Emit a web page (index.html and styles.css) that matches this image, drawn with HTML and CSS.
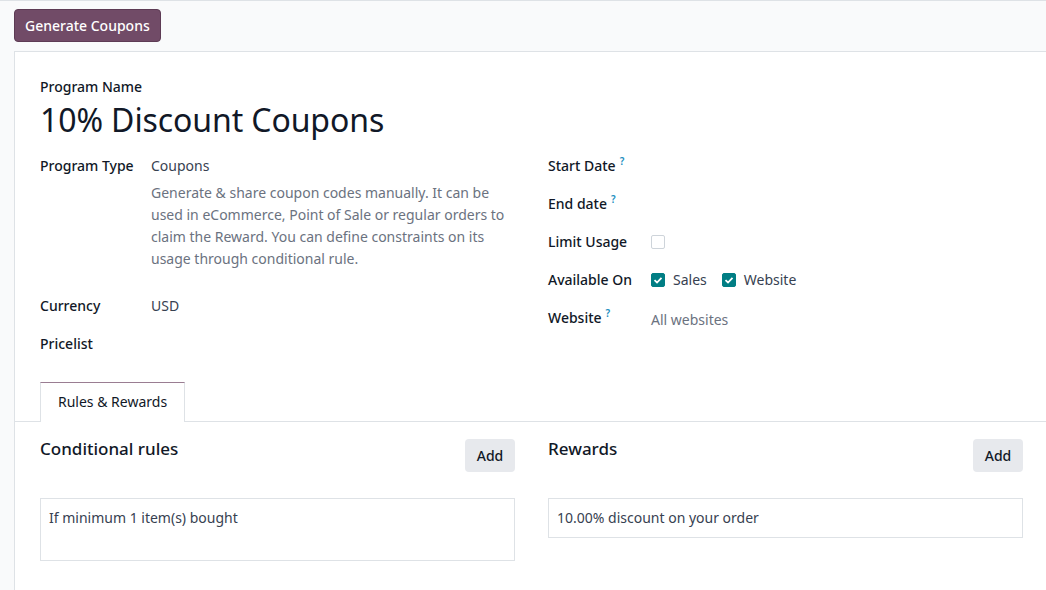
FILE: index.html
```html
<!DOCTYPE html>
<html>
<head>
<meta charset="utf-8">
<link rel="stylesheet" href="styles.css">
</head>
<body>
<div class="topbar">
  <button class="btn btn-primary">Generate Coupons</button>
</div>
<div class="sheet">
  <div class="title-block">
    <div class="name-label">Program Name</div>
    <h1 class="title">10% Discount Coupons</h1>
  </div>
  <div class="groups">
    <div class="group group-left">
      <div class="row">
        <div class="lbl">Program Type</div>
        <div class="val">
          <div>Coupons</div>
          <div class="desc">Generate &amp; share coupon codes manually. It can be used in eCommerce, Point of Sale or regular orders to claim the Reward. You can define constraints on its usage through conditional rule.</div>
        </div>
      </div>
      <div class="row"><div class="lbl">Currency</div><div class="val">USD</div></div>
      <div class="row"><div class="lbl">Pricelist</div><div class="val"></div></div>
    </div>
    <div class="group group-right">
      <div class="row"><div class="lbl">Start Date<sup class="tip">?</sup></div><div class="val"></div></div>
      <div class="row"><div class="lbl">End date<sup class="tip">?</sup></div><div class="val"></div></div>
      <div class="row"><div class="lbl">Limit Usage</div><div class="val"><span class="check"></span></div></div>
      <div class="row">
        <div class="lbl">Available On</div>
        <div class="val checks">
          <span class="check-item"><span class="check on"><svg viewBox="0 0 14 14" width="14" height="14"><path d="M3.5 7.2 L6 9.5 L10.5 4.8" fill="none" stroke="#fff" stroke-width="1.8"/></svg></span>Sales</span>
          <span class="check-item"><span class="check on"><svg viewBox="0 0 14 14" width="14" height="14"><path d="M3.5 7.2 L6 9.5 L10.5 4.8" fill="none" stroke="#fff" stroke-width="1.8"/></svg></span>Website</span>
        </div>
      </div>
      <div class="row"><div class="lbl">Website<sup class="tip">?</sup></div><div class="val muted">All websites</div></div>
    </div>
  </div>
  <div class="tabs">
    <div class="tab active">Rules &amp; Rewards</div>
  </div>
  <div class="tab-content">
    <div class="col">
      <div class="col-head">
        <h3>Conditional rules</h3>
        <button class="btn btn-secondary">Add</button>
      </div>
      <div class="list-box tall">If minimum 1 item(s) bought</div>
    </div>
    <div class="col">
      <div class="col-head">
        <h3>Rewards</h3>
        <button class="btn btn-secondary">Add</button>
      </div>
      <div class="list-box">10.00% discount on your order</div>
    </div>
  </div>
</div>
</body>
</html>
```
FILE: styles.css
```css
* { box-sizing: border-box; }
html, body { height: 100%; }
body {
  margin: 0;
  background: #f9fafb;
  font-family: "Noto Sans", "Open Sans", sans-serif;
  font-size: 14px;
  color: #374151;
  border-top: 1px solid #dee2e6;
  overflow: hidden;
}
.topbar {
  padding: 8px 14px 8px;
  height: 50px;
}
.btn {
  font-family: inherit;
  font-size: 14px;
  border-radius: 4px;
  cursor: pointer;
}
.btn-primary {
  background: #714b67;
  color: #fff;
  border: 1px solid #5d3b54;
  height: 33px;
  padding: 0 10px;
  font-weight: 500;
}
.sheet {
  margin-left: 14px;
  background: #fff;
  border-left: 1px solid #dee2e6;
  border-top: 1px solid #dee2e6;
  padding: 25px 23px 0 25px;
  min-height: calc(100% - 50px);
}
.name-label {
  font-weight: 500;
  color: #111827;
  line-height: 20px;
}
.title {
  margin: 3px 0 0;
  font-size: 32px;
  font-weight: 400;
  line-height: 40px;
  color: #111827;
  letter-spacing: -0.1px;
}
.groups {
  display: grid;
  grid-template-columns: 475px 475px;
  column-gap: 33px;
  margin-top: 15px;
}
.row {
  display: flex;
  line-height: 22px;
  margin-bottom: 16px;
}
.lbl {
  font-weight: 500;
  color: #111827;
  flex: none;
}
.group-left .lbl { width: 111px; }
.group-right .lbl { width: 103px; }
.val { flex: 1; color: #374151; }
.desc {
  color: #6b7280;
  margin-top: 5px;
  margin-bottom: 9px;
  line-height: 22px;
}
.tip {
  color: #1b8ec0;
  font-size: 10px;
  font-weight: 600;
  margin-left: 4px;
  vertical-align: 6px;
  line-height: 0;
}
.muted { color: #6b7280; padding-top: 2px; }
.check {
  display: inline-block;
  width: 14px;
  height: 14px;
  border: 1px solid #ced4da;
  border-radius: 2px;
  vertical-align: -2px;
}
.check.on {
  background: #017e84;
  border-color: #017e84;
  margin-right: 8px;
}
.check svg { display: block; margin: -1px; }
.checks { display: flex; gap: 15px; }
.check-item { display: inline-flex; align-items: center; }
.tabs {
  display: flex;
  margin-top: 11px;
  margin-left: -26px;
  margin-right: -23px;
  padding-left: 26px;
  border-bottom: 1px solid #dee2e6;
}
.tab {
  height: 40px;
  line-height: 38px;
  padding: 0 17px;
  border: 1px solid #dee2e6;
  border-top-color: #9a7d92;
  border-bottom: none;
  margin-bottom: -1px;
  background: #fff;
  color: #111827;
}
.tab-content {
  display: grid;
  grid-template-columns: 475px 475px;
  column-gap: 33px;
  padding-top: 17px;
}
.col-head {
  display: flex;
  justify-content: space-between;
  align-items: flex-start;
  height: 59px;
}
.col-head h3 {
  margin: -1px 0 0;
  font-size: 17px;
  font-weight: 500;
  color: #111827;
  line-height: 22px;
}
.btn-secondary {
  background: #e7e9ed;
  color: #111827;
  border: none;
  height: 33px;
  width: 50px;
  padding: 0;
  font-weight: 500;
}
.list-box {
  border: 1px solid #dee2e6;
  padding: 9px 8px;
  line-height: 20px;
  height: 40px;
  color: #374151;
}
.list-box.tall { height: 63px; }
```
